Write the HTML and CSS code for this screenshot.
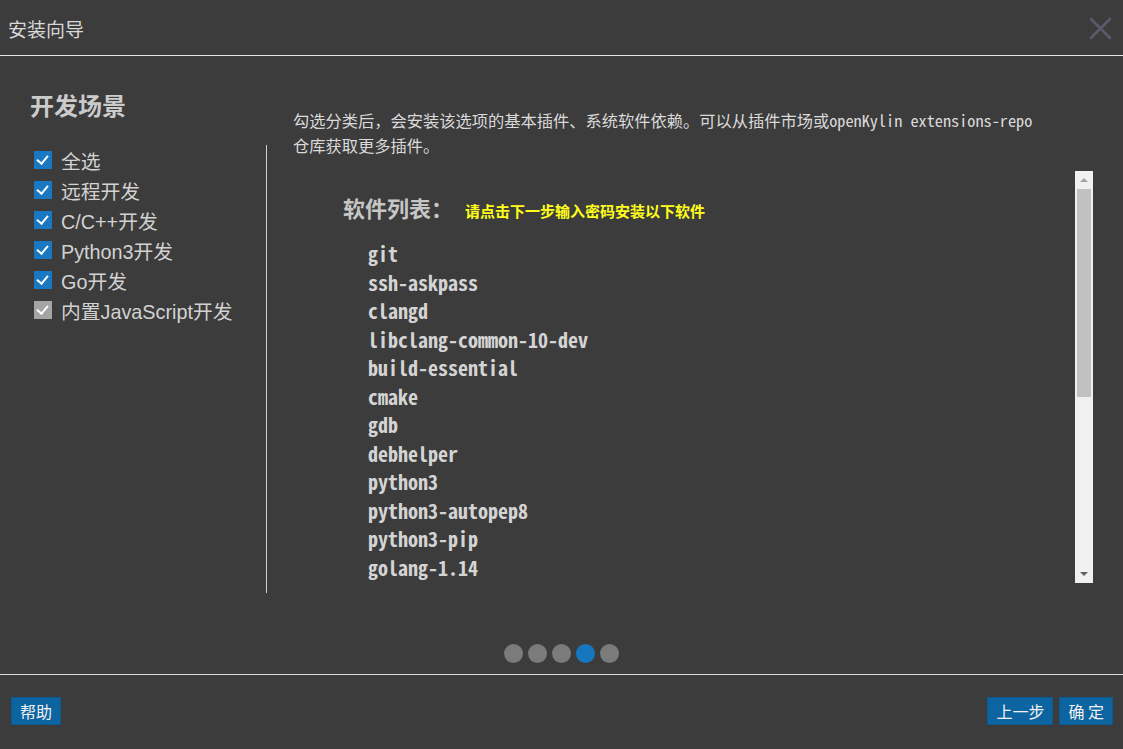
FILE: index.html
```html
<!DOCTYPE html>
<html lang="zh-CN">
<head>
    <meta charset="UTF-8">
    <meta name="viewport" content="width=device-width, initial-scale=1.0">
    <title>安装向导</title>
    <link rel="stylesheet" href="styles.css">
</head>
<body>
    <div id="titlebar">
        <span class="title">安装向导</span>
        <button class="close" aria-label="关闭">
            <svg width="23" height="23" viewBox="0 0 23 23">
                <path d="M2 2 L21 21 M21 2 L2 21" stroke="#5a5a6e" stroke-width="2.6" stroke-linecap="round"/>
            </svg>
        </button>
    </div>

    <div id="main">
        <div class="columns">
            <div class="sidebar">
                <h1 class="scene-title">开发场景</h1>
                <div class="options">
                    <label class="option"><span class="check"></span>全选</label>
                    <label class="option"><span class="check"></span>远程开发</label>
                    <label class="option"><span class="check"></span>C/C++开发</label>
                    <label class="option"><span class="check"></span>Python3开发</label>
                    <label class="option"><span class="check"></span>Go开发</label>
                    <label class="option"><span class="check disabled"></span>内置JavaScript开发</label>
                </div>
            </div>

            <div class="content">
                <p class="desc">勾选分类后，会安装该选项的基本插件、系统软件依赖。可以从插件市场或openKylin extensions-repo<br>仓库获取更多插件。</p>
                <div class="listbox">
                    <div class="list">
                        <div class="list-head">
                            <span class="list-title">软件列表：</span>
                            <span class="list-hint">请点击下一步输入密码安装以下软件</span>
                        </div>
                        <ul class="packages">
                            <li>git</li>
                            <li>ssh-askpass</li>
                            <li>clangd</li>
                            <li>libclang-common-10-dev</li>
                            <li>build-essential</li>
                            <li>cmake</li>
                            <li>gdb</li>
                            <li>debhelper</li>
                            <li>python3</li>
                            <li>python3-autopep8</li>
                            <li>python3-pip</li>
                            <li>golang-1.14</li>
                        </ul>
                    </div>
                    <div class="scrollbar">
                        <div class="arrow up"></div>
                        <div class="track">
                            <div class="thumb"></div>
                        </div>
                        <div class="arrow down"></div>
                    </div>
                </div>
            </div>
        </div>

        <div class="pager">
            <span class="dot"></span>
            <span class="dot"></span>
            <span class="dot"></span>
            <span class="dot active"></span>
            <span class="dot"></span>
        </div>
    </div>

    <div id="footer">
        <button class="btn">帮助</button>
        <div class="right-btns">
            <button class="btn">上一步</button>
            <button class="btn">确 定</button>
        </div>
    </div>
</body>
</html>
```

FILE: styles.css
```css
body {
    margin: 0;
    width: 1123px;
    height: 749px;
    overflow: hidden;
    background-color: #3c3c3c;
    color: #d6d6d6;
    font-family: "Liberation Sans", "Noto Sans CJK SC", sans-serif;
}

#titlebar {
    height: 55px;
    border-bottom: 1px solid #e6e6e6;
    display: flex;
    align-items: center;
    justify-content: space-between;
    padding: 0 11px 0 8px;
}

.title {
    font-family: "Noto Sans CJK SC", sans-serif;
    font-size: 19px;
    color: #d8d8d8;
    margin-top: 2px;
}

.close {
    background: none;
    border: none;
    padding: 0;
    width: 23px;
    height: 23px;
    margin-top: 1px;
}

.columns {
    display: flex;
    height: 537px;
}

.sidebar {
    width: 267px;
    flex-shrink: 0;
}

.scene-title {
    margin: 0;
    padding: 34px 0 0 30px;
    height: 89px;
    line-height: 30px;
    font-family: "Noto Sans CJK SC", sans-serif;
    font-size: 24px;
    font-weight: bold;
    color: #cbcbcb;
    box-sizing: border-box;
}

.options {
    height: 448px;
    box-sizing: border-box;
    border-right: 1px solid #d0d0d0;
    padding: 0 0 0 34px;
}

.option {
    display: flex;
    align-items: center;
    height: 30px;
    font-size: 19.8px;
    color: #d2d2d2;
}

.check {
    width: 18px;
    height: 18px;
    margin-right: 9px;
    background-color: #1a78c2;
    position: relative;
}

.check::after {
    content: "";
    position: absolute;
    left: 5px;
    top: 2px;
    width: 5px;
    height: 9px;
    border-right: 2px solid #fff;
    border-bottom: 2px solid #fff;
    transform: rotate(40deg);
}

.check.disabled {
    background-color: #a5a5a5;
}

.content {
    flex: 1;
    padding: 52px 30px 0 26px;
}

.desc {
    margin: 0;
    font-family: "Noto Sans Mono CJK SC", "Noto Sans CJK SC", monospace;
    font-size: 16.25px;
    line-height: 25px;
    color: #dadada;
}

.listbox {
    margin-top: 13px;
    height: 412px;
    display: flex;
}

.list {
    flex: 1;
    overflow: hidden;
    padding: 19px 0 0 50px;
}

.list-head {
    display: flex;
    align-items: baseline;
    gap: 12px;
    height: 34px;
    line-height: 34px;
}

.list-title {
    font-family: "Noto Sans CJK SC", sans-serif;
    font-size: 22px;
    font-weight: bold;
    color: #c6c6c6;
}

.list-hint {
    font-family: "Noto Sans CJK SC", sans-serif;
    font-size: 15px;
    font-weight: bold;
    color: #ffff1a;
}

.packages {
    list-style: none;
    margin: 16px 0 0 25px;
    padding: 0;
}

.packages li {
    font-family: "Noto Sans Mono CJK SC", "DejaVu Sans Mono", monospace;
    font-size: 20px;
    font-weight: bold;
    line-height: 28.55px;
    color: #d4d4d4;
}

.scrollbar {
    width: 18px;
    background-color: #f0f0f0;
    display: flex;
    flex-direction: column;
    align-items: center;
}

.arrow {
    height: 18px;
    width: 18px;
    display: flex;
    align-items: center;
    justify-content: center;
}

.arrow.up::before {
    content: "";
    border-left: 4px solid transparent;
    border-right: 4px solid transparent;
    border-bottom: 4px solid #a3a3a3;
}

.arrow.down::before {
    content: "";
    border-left: 4px solid transparent;
    border-right: 4px solid transparent;
    border-top: 4px solid #606060;
}

.track {
    flex: 1;
    width: 14px;
}

.thumb {
    height: 208px;
    background-color: #c1c1c1;
}

.pager {
    display: flex;
    justify-content: center;
    gap: 5px;
    margin-top: 51px;
    height: 30px;
}

.dot {
    width: 19px;
    height: 19px;
    border-radius: 50%;
    background-color: #7b7b7b;
}

.dot.active {
    background-color: #1777be;
}

#footer {
    border-top: 1px solid #d8d8d8;
    display: flex;
    justify-content: space-between;
    padding: 22px 10px 0 11px;
}

.right-btns {
    display: flex;
    gap: 6px;
}

.btn {
    height: 28px;
    padding: 0 8px;
    background-color: #0c64a0;
    border: 1px solid #0a5a90;
    color: #f2f2f2;
    font-family: "Noto Sans CJK SC", sans-serif;
    font-size: 16px;
    line-height: 26px;
}
```
